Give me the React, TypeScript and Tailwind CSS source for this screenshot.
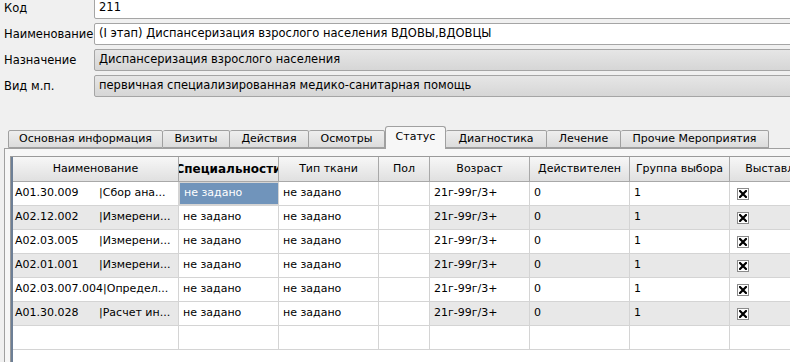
import React from 'react';

const font = { fontFamily: '"DejaVu Sans", Verdana, sans-serif' };

const fields = [
  { label: 'Код', value: '211', editable: true },
  { label: 'Наименование', value: '(I этап) Диспансеризация взрослого населения ВДОВЫ,ВДОВЦЫ', editable: true },
  { label: 'Назначение', value: 'Диспансеризация взрослого населения', editable: false },
  { label: 'Вид м.п.', value: 'первичная специализированная медико-санитарная помощь', editable: false },
];

const tabs = [
  { name: 'Основная информация', w: 'w-[155px]' },
  { name: 'Визиты', w: 'w-[67px]' },
  { name: 'Действия', w: 'w-[79px]' },
  { name: 'Осмотры', w: 'w-[76px]' },
  { name: 'Статус', w: 'w-[61px]', active: true },
  { name: 'Диагностика', w: 'w-[101px]' },
  { name: 'Лечение', w: 'w-[74px]' },
  { name: 'Прочие Мероприятия', w: 'w-[148px]' },
];

const columns = [
  { name: 'Наименование', w: 'w-[166px]' },
  { name: 'Специальности', w: 'w-[100px]', bold: true },
  { name: 'Тип ткани', w: 'w-[100px]' },
  { name: 'Пол', w: 'w-[51px]' },
  { name: 'Возраст', w: 'w-[100px]' },
  { name: 'Действителен', w: 'w-[100px]' },
  { name: 'Группа выбора', w: 'w-[100px]' },
  { name: 'Выставлять', w: 'w-[100px]' },
];

const rows = [
  { code: 'A01.30.009', name: 'Сбор ана...' },
  { code: 'A02.12.002', name: 'Измерени...' },
  { code: 'A02.03.005', name: 'Измерени...' },
  { code: 'A02.01.001', name: 'Измерени...' },
  { code: 'A02.03.007.004', name: 'Определ...' },
  { code: 'A01.30.028', name: 'Расчет ин...' },
];

const CheckMark = () => (
  <div className="w-[12px] h-[12px] border border-[#8a8a8a] bg-white flex items-center justify-center">
    <svg width="8" height="8" viewBox="0 0 8 8">
      <path d="M1 1 L7 7 M7 1 L1 7" stroke="#000" strokeWidth="2.2" strokeLinecap="square" />
    </svg>
  </div>
);

const cell = 'shrink-0 h-full flex items-center px-[4px] border-r border-[#d4d4d4] whitespace-nowrap overflow-hidden';

export default function App() {
  return (
    <div className="w-[790px] h-[362px] overflow-hidden bg-[#f0f0f0] text-[11px] text-black" style={font}>
      <div className="-mt-[3px] flex flex-col gap-[4px]">
        {fields.map((f) => (
          <div key={f.label} className="flex items-center">
            <div className="w-[94px] shrink-0 pl-[4px] pt-[2px] text-[11.5px]">{f.label}</div>
            <div
              className={
                'w-[720px] shrink-0 h-[22px] flex items-center px-[4px] border border-[#a5a5a5] rounded-[2px] text-[11.5px] ' +
                (f.editable ? 'bg-white' : 'bg-gradient-to-b from-[#e6e6e6] to-[#d6d6d6]')
              }
            >
              {f.value}
            </div>
          </div>
        ))}
      </div>

      <div className="mt-[29px] flex items-end pl-[8px] relative z-10">
        {tabs.map((t) =>
          t.active ? (
            <div
              key={t.name}
              className={`${t.w} shrink-0 h-[23px] -mb-px flex items-center justify-center bg-[#f7f7f7] border border-b-0 border-[#a0a0a0] rounded-t-[3px] pb-[2px]`}
            >
              {t.name}
            </div>
          ) : (
            <div
              key={t.name}
              className={`${t.w} shrink-0 h-[18px] flex items-center justify-center bg-gradient-to-b from-[#eeeeee] to-[#dcdcdc] border border-l-0 first:border-l border-[#a0a0a0] rounded-t-[2px]`}
            >
              {t.name}
            </div>
          )
        )}
      </div>

      <div className="ml-[4px] w-[800px] h-[220px] border border-[#a0a0a0] bg-[#f7f7f7] pt-[7px] pl-[5px]">
        <div className="h-full border-l border-t border-[#9a9a9a] bg-white">
          <div className="h-full border-l-2 border-[#6d7f96]">
            <div className="flex h-[25px] bg-gradient-to-b from-[#f7f7f7] to-[#e0e0e0] border-b border-[#a8a8a8]">
              {columns.map((c) => (
                <div
                  key={c.name}
                  className={`${c.w} shrink-0 h-full flex items-center justify-center overflow-hidden whitespace-nowrap border-r border-[#a8a8a8] ${c.bold ? 'font-bold text-[12px]' : ''}`}
                >
                  <span className="shrink-0">{c.name}</span>
                </div>
              ))}
            </div>
            {rows.map((r, i) => (
              <div
                key={r.code}
                className={`flex h-[24px] border-b border-[#d4d4d4] ${i % 2 === 1 ? 'bg-[#e8e8e8]' : 'bg-white'}`}
              >
                <div className={`${cell} w-[166px] pl-[2px]`}>
                  <span className="min-w-[84px]">{r.code}</span>
                  <span>|{r.name}</span>
                </div>
                <div
                  className={`${cell} w-[100px] ${i === 0 ? 'bg-[#7094bb] text-white border border-[#55779e]' : 'bg-white'}`}
                >
                  не задано
                </div>
                <div className={`${cell} w-[100px] bg-white`}>не задано</div>
                <div className={`${cell} w-[51px] bg-white`}></div>
                <div className={`${cell} w-[100px]`}>21г-99г/3+</div>
                <div className={`${cell} w-[100px]`}>0</div>
                <div className={`${cell} w-[100px]`}>1</div>
                <div className={`${cell} w-[100px] pl-[7px]`}>
                  <CheckMark />
                </div>
              </div>
            ))}
            <div className="flex h-[24px] border-b border-[#d4d4d4] bg-white">
              {columns.map((c) => (
                <div key={c.name} className={`${cell} ${c.w}`}></div>
              ))}
            </div>
          </div>
        </div>
      </div>
    </div>
  );
}
